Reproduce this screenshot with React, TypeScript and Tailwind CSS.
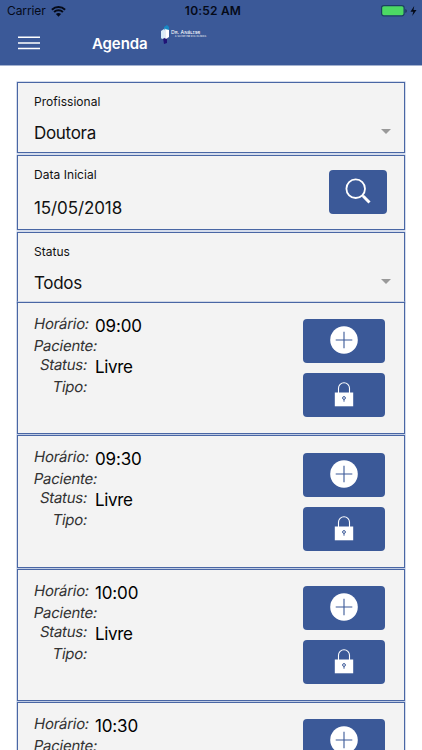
import React from "react";

const times = ["09:00", "09:30", "10:00", "10:30"];
const cardStyle = "border border-[#4966a4] bg-[#f3f3f3] shadow-[0_0_0_0.5px_#a9b9da]";
const buttonStyle = "flex h-11 items-center justify-center rounded bg-[#3b5998]";
const labelStyle = "inline-block -skew-x-[10deg] whitespace-nowrap";

function Caret() {
  return (
    <svg className="block h-[5px] w-[10px]" viewBox="0 0 10 5">
      <path d="M0 0h10L5 5z" fill="#999" />
    </svg>
  );
}

function SelectField({ label, value, height }: { label: string; value: string; height: string }) {
  return (
    <div className={`${cardStyle} ${height} flex flex-col pl-4 pr-[13px] pt-[11px]`}>
      <label className="text-[12px] leading-4 tracking-[0.03px]">{label}</label>
      <div className="mt-[12px] flex h-[22px] items-center justify-between">
        <span className="text-[17px] leading-[22px] tracking-[-0.3px]">{value}</span>
        <span className="-mt-[4px]"><Caret /></span>
      </div>
    </div>
  );
}

function PlusIcon() {
  return (
    <svg className="size-7" viewBox="0 0 28 28" fill="none">
      <circle cx="14" cy="14" r="13.8" fill="white" />
      <path d="M14 5.7v16.6M5.7 14h16.6" stroke="#3b5998" strokeWidth="1.1" />
    </svg>
  );
}

function LockIcon() {
  return (
    <svg className="h-[26px] w-5" viewBox="0 0 20 26" fill="none">
      <path d="M4.5 12V7.2a5.5 5.5 0 0 1 11 0V12" stroke="white" strokeWidth="1.1" />
      <path d="M.8 11.5h18.4v13.8H.8z" fill="white" />
      <circle cx="10" cy="17" r="1.4" stroke="#3b5998" strokeWidth="1" />
      <path d="M10 18.3v2.4" stroke="#3b5998" strokeWidth="1" />
    </svg>
  );
}

function Appointment({ time }: { time: string }) {
  return (
    <article className={`${cardStyle} flex h-[132.3px] shrink-0 justify-between pl-4 pr-[19px]`}>
      <div className="grid grid-cols-[54px_auto] grid-rows-[22px_19px_22px_22px] gap-x-[7px] pt-[11px] text-[15px] leading-5 tracking-[-0.27px] text-[#333]">
        <span className={`${labelStyle} text-right`}>Horário:</span>
        <span className="mt-[2px] text-[17px] leading-5 tracking-[-0.15px] text-black">{time}</span>
        <span className={`${labelStyle} col-span-2 justify-self-start`}>Paciente:</span>
        <span className={`${labelStyle} pr-[1px] text-right`}>Status:</span>
        <span className="mt-[2px] text-[17px] leading-5 tracking-[-0.35px] text-black">Livre</span>
        <span className={`${labelStyle} pr-[1px] text-right`}>Tipo:</span>
      </div>
      <div className="flex w-[82px] flex-col gap-[10px] pt-[16.4px]">
        <button aria-label="Agendar" className={`${buttonStyle} pb-[2px]`}><PlusIcon /></button>
        <button aria-label="Bloquear" className={`${buttonStyle} pb-[2px]`}><LockIcon /></button>
      </div>
    </article>
  );
}

export default function App() {
  return (
    <div className="h-[750px] w-[422px] overflow-hidden bg-white font-['Inter','Liberation_Sans',sans-serif] text-[#111]">
      <header className="h-[66px] border-b border-[#a4b2cf] bg-[#3b5998]">
        <div className="grid h-[22px] grid-cols-3 items-center px-[7px] text-[12px] leading-4 text-[#050a18]">
          <div className="flex items-center gap-[5px]">
            <span className="tracking-[-0.1px]">Carrier</span>
            <svg className="h-[11px] w-[15px]" viewBox="0 0 15 11" fill="none" stroke="#050a18">
              <path d="M.9 3.7a9.6 9.6 0 0 1 13.2 0M3.1 6.1a6.4 6.4 0 0 1 8.8 0" strokeWidth="2" />
              <path d="M4.9 8.1a3.8 3.8 0 0 1 5.2 0L7.5 10.8z" fill="#050a18" stroke="none" />
            </svg>
          </div>
          <span className="pl-[4px] text-center font-semibold tracking-[0.2px]">10:52 AM</span>
          <div className="-mr-[2px] flex items-center justify-end">
            <svg className="h-3 w-[36px]" viewBox="0 0 36 12">
              <rect x=".6" y=".6" width="22.5" height="10.2" rx="2.2" fill="#4cd964" stroke="#1b3f63" strokeWidth="1.2" />
              <path d="M24.4 4v4q1.4-.5 1.4-2t-1.4-2" fill="#1b3151" />
              <path d="M33.2 1 29.5 6.7h2.8L31.2 11l4.3-6h-3z" fill="#050a18" />
            </svg>
          </div>
        </div>
        <div className="flex h-[43px] items-start pl-[18px]">
          <button aria-label="Menu" className="mt-[14px]">
            <svg className="block h-[14px] w-[22px]" viewBox="0 0 22 14" stroke="white" strokeWidth="1.5">
              <path d="M0 1.2h22M0 6.9h22M0 12.6h22" />
            </svg>
          </button>
          <h1 className="ml-[52px] mt-[12px] w-[56px] text-[15px] font-semibold leading-5 tracking-[-0.1px] text-white">Agenda</h1>
          <div className="ml-[13px] mt-[3px] flex">
            <svg className="h-[19px] w-[9px]" viewBox="0 0 9 19">
              <path d="m3 2 3-2 2 2v5L3 8z" fill="#1788c4" />
              <path d="m2 13 4-2v7l-3 1z" fill="#211476" />
              <path d="m0 6 3-2 1 2v7l-3 1-1-1z" fill="#d9edf9" />
              <path d="m4 4 4 1v7l-3 2-2-2V6z" fill="white" />
              <path d="M4 3v10" stroke="#8db2d7" strokeWidth=".5" />
            </svg>
            <div className="mt-[4.5px] flex w-[40px] flex-col pl-px text-white">
              <span className="whitespace-nowrap text-[5.2px] leading-[5.5px] tracking-[0px] [font-variant:small-caps]">Dr. Análise</span>
              <span className="ml-[4px] whitespace-nowrap text-[2px] font-medium leading-[2px] tracking-[0.27px]">A SAÚDE EM SUA CLÍNICA</span>
            </div>
          </div>
        </div>
      </header>
      <main className="flex flex-col px-[17px] pt-4">
        <SelectField label="Profissional" value="Doutora" height="h-[71px]" />
        <section className={`${cardStyle} mt-[1.5px] flex h-[75.5px] justify-between pl-4 pr-[17px]`}>
          <div className="flex flex-col pt-[11px]">
            <label className="text-[12px] leading-4 tracking-[0.05px]">Data Inicial</label>
            <span className="mt-[14px] text-[17px] leading-[22px] tracking-[-0.1px]">15/05/2018</span>
          </div>
          <button aria-label="Buscar" className={`${buttonStyle} mt-[14.5px] w-[58px]`}>
            <svg className="-mt-[2px] size-[26px]" viewBox="0 0 26 26" fill="none" stroke="white">
              <circle cx="10.7" cy="10.7" r="9.3" strokeWidth="1.8" />
              <path d="m17.4 17.4 1.5 1.5" strokeWidth="2" />
              <path d="m18.3 18.3 6.2 6.2" strokeWidth="3" />
            </svg>
          </button>
        </section>
        <div className="mt-[2px]"><SelectField label="Status" value="Todos" height="h-[71px]" /></div>
        <div className="-mt-px flex flex-col gap-px">
          {times.map((time) => <Appointment key={time} time={time} />)}
        </div>
      </main>
    </div>
  );
}
